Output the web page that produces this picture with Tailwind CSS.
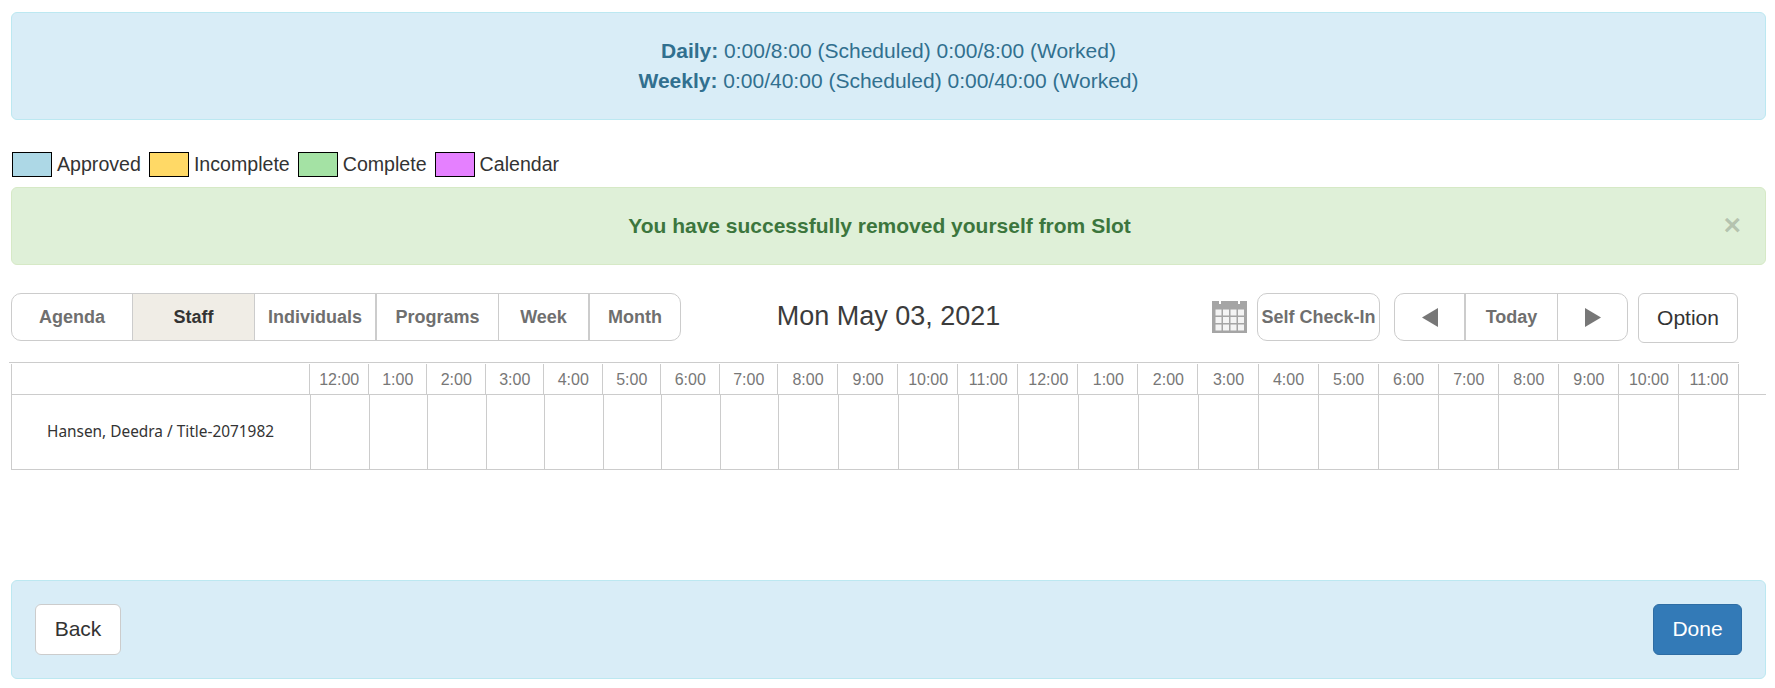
<!DOCTYPE html>
<html><head><meta charset="utf-8"><script src="https://cdn.jsdelivr.net/npm/@tailwindcss/browser@4"></script></head>
<body class="bg-white font-['Liberation_Sans',sans-serif] text-[#333]">
<div class="pt-[12px] pl-[11px] pr-[9px] h-[688px] overflow-hidden">
  <div class="h-[108px] rounded-[6px] border border-[#bce8f1] bg-[#d9edf7] text-[#31708f] text-[21px] leading-[30px] text-center pt-[23px]">
    <div><b>Daily:</b> 0:00/8:00 (Scheduled) 0:00/8:00 (Worked)</div>
    <div><b>Weekly:</b> 0:00/40:00 (Scheduled) 0:00/40:00 (Worked)</div>
  </div>
  <div class="flex items-center h-[25px] mt-[32px] ml-[1px] text-[19.6px] gap-[8px]">
    <div class="flex items-center gap-[5px]"><span class="w-[40px] h-[25px] border border-black bg-[#add8e6]"></span>Approved</div>
    <div class="flex items-center gap-[5px]"><span class="w-[40px] h-[25px] border border-black bg-[#ffd966]"></span>Incomplete</div>
    <div class="flex items-center gap-[5px]"><span class="w-[40px] h-[25px] border border-black bg-[#a4e2a4]"></span>Complete</div>
    <div class="flex items-center gap-[5px]"><span class="w-[40px] h-[25px] border border-black bg-[#e580ff]"></span>Calendar</div>
  </div>
  <div class="relative h-[78px] mt-[10px] mb-[28px] rounded-[6px] border border-[#d6e9c6] bg-[#dff0d8] text-[#3c763d] text-[21px] font-bold flex items-center justify-center pr-[18px]">
    You have successfully removed yourself from Slot
    <span class="absolute right-[24px] top-[22px] text-[#000]/20 text-[30px] leading-[30px]">×</span>
  </div>
  <div class="flex items-start h-[48px] text-[18px] font-bold text-[#6f6f6f]">
    <div class="flex h-[48px] w-[670px] rounded-[10px] border border-[#ccc] overflow-hidden">
      <div class="w-[121px] border-r border-[#ccc] flex items-center justify-center">Agenda</div>
      <div class="w-[122px] border-r border-[#ccc] bg-[#f0ede6] text-[#333] flex items-center justify-center">Staff</div>
      <div class="w-[122px] border-r-2 border-[#ccc] flex items-center justify-center">Individuals</div>
      <div class="w-[122px] border-r border-[#ccc] flex items-center justify-center">Programs</div>
      <div class="w-[91px] border-r-2 border-[#ccc] flex items-center justify-center">Week</div>
      <div class="flex-1 flex items-center justify-center">Month</div>
    </div>
    <div class="w-[531px] pr-[116px] text-center text-[27px] font-normal text-[#3c3c3c] leading-[46px]">Mon May 03, 2021</div>
    <svg class="w-[35px] h-[32px] mt-[8px] shrink-0" viewBox="0 0 35 32"><path fill="#a5a5a5" d="M0 0h7v3h2V0h17v3h2V0h7v32H0z"/><g fill="#f4f4f4"><rect x="3.500" y="8.500" width="6" height="6"/><rect x="11" y="8.500" width="6" height="6"/><rect x="18.500" y="8.500" width="6" height="6"/><rect x="26" y="8.500" width="6" height="6"/><rect x="3.500" y="16" width="6" height="6"/><rect x="11" y="16" width="6" height="6"/><rect x="18.500" y="16" width="6" height="6"/><rect x="26" y="16" width="6" height="6"/><rect x="3.500" y="23.500" width="6" height="6"/><rect x="11" y="23.500" width="6" height="6"/><rect x="18.500" y="23.500" width="6" height="6"/><rect x="26" y="23.500" width="6" height="6"/></g></svg>
    <div class="w-[123px] h-[48px] ml-[10px] rounded-[10px] border border-[#ccc] flex items-center justify-center whitespace-nowrap">Self Check-In</div>
    <div class="flex w-[234px] h-[48px] ml-[14px] rounded-[10px] border border-[#ccc]">
      <div class="w-[71px] border-r-2 border-[#ccc] flex items-center justify-center"><svg class="w-[16px] h-[19px]" viewBox="0 0 16 19"><path fill="#777" d="M16 0v19L0 9.500z"/></svg></div>
      <div class="w-[92px] border-r border-[#ccc] flex items-center justify-center">Today</div>
      <div class="flex-1 flex items-center justify-center"><svg class="w-[16px] h-[19px]" viewBox="0 0 16 19"><path fill="#777" d="M0 0v19l16-9.500z"/></svg></div>
    </div>
    <div class="w-[100px] h-[50px] ml-[10px] rounded-[6px] border border-[#ccc] flex items-center justify-center text-[21px] font-normal text-[#333]">Option</div>
  </div>
  <div class="mt-[21px] text-[16px] text-[#777]">
    <div class="h-px bg-[#ccc] w-[1730px] ml-[-2px]"></div>
    <div class="w-[1728px] h-[30px] mt-[1px] flex border-l border-r border-[#ccc]">
      <div class="w-[297px] shrink-0"></div>
      <div class="flex-1 grid grid-cols-[repeat(8,58.5px)_repeat(16,1fr)]">
        <div class="border-l border-[#ccc] flex items-center justify-center pt-[1px] pl-[1px]">12:00</div><div class="border-l border-[#ccc] flex items-center justify-center pt-[1px] pl-[1px]">1:00</div><div class="border-l border-[#ccc] flex items-center justify-center pt-[1px] pl-[1px]">2:00</div><div class="border-l border-[#ccc] flex items-center justify-center pt-[1px] pl-[1px]">3:00</div><div class="border-l border-[#ccc] flex items-center justify-center pt-[1px] pl-[1px]">4:00</div><div class="border-l border-[#ccc] flex items-center justify-center pt-[1px] pl-[1px]">5:00</div><div class="border-l border-[#ccc] flex items-center justify-center pt-[1px] pl-[1px]">6:00</div><div class="border-l border-[#ccc] flex items-center justify-center pt-[1px] pl-[1px]">7:00</div><div class="border-l border-[#ccc] flex items-center justify-center pt-[1px] pl-[1px]">8:00</div><div class="border-l border-[#ccc] flex items-center justify-center pt-[1px] pl-[1px]">9:00</div><div class="border-l border-[#ccc] flex items-center justify-center pt-[1px] pl-[1px]">10:00</div><div class="border-l border-[#ccc] flex items-center justify-center pt-[1px] pl-[1px]">11:00</div><div class="border-l border-[#ccc] flex items-center justify-center pt-[1px] pl-[1px]">12:00</div><div class="border-l border-[#ccc] flex items-center justify-center pt-[1px] pl-[1px]">1:00</div><div class="border-l border-[#ccc] flex items-center justify-center pt-[1px] pl-[1px]">2:00</div><div class="border-l border-[#ccc] flex items-center justify-center pt-[1px] pl-[1px]">3:00</div><div class="border-l border-[#ccc] flex items-center justify-center pt-[1px] pl-[1px]">4:00</div><div class="border-l border-[#ccc] flex items-center justify-center pt-[1px] pl-[1px]">5:00</div><div class="border-l border-[#ccc] flex items-center justify-center pt-[1px] pl-[1px]">6:00</div><div class="border-l border-[#ccc] flex items-center justify-center pt-[1px] pl-[1px]">7:00</div><div class="border-l border-[#ccc] flex items-center justify-center pt-[1px] pl-[1px]">8:00</div><div class="border-l border-[#ccc] flex items-center justify-center pt-[1px] pl-[1px]">9:00</div><div class="border-l border-[#ccc] flex items-center justify-center pt-[1px] pl-[1px]">10:00</div><div class="border-l border-[#ccc] flex items-center justify-center pt-[1px] pl-[1px]">11:00</div>
      </div>
    </div>
    <div class="h-px bg-[#ccc] w-[1755px]"></div>
    <div class="w-[1728px] h-[75px] flex border-b border-l border-r border-[#ccc]">
      <div class="w-[298px] shrink-0 flex items-center justify-center font-['Noto_Sans',sans-serif] text-[15.4px] text-[#333] pr-[1px]">Hansen, Deedra / Title-2071982</div>
      <div class="flex-1 grid grid-cols-[repeat(8,58.5px)_repeat(16,1fr)]">
        <div class="border-l border-[#ccc]"></div><div class="border-l border-[#ccc]"></div><div class="border-l border-[#ccc]"></div><div class="border-l border-[#ccc]"></div><div class="border-l border-[#ccc]"></div><div class="border-l border-[#ccc]"></div><div class="border-l border-[#ccc]"></div><div class="border-l border-[#ccc]"></div><div class="border-l border-[#ccc]"></div><div class="border-l border-[#ccc]"></div><div class="border-l border-[#ccc]"></div><div class="border-l border-[#ccc]"></div><div class="border-l border-[#ccc]"></div><div class="border-l border-[#ccc]"></div><div class="border-l border-[#ccc]"></div><div class="border-l border-[#ccc]"></div><div class="border-l border-[#ccc]"></div><div class="border-l border-[#ccc]"></div><div class="border-l border-[#ccc]"></div><div class="border-l border-[#ccc]"></div><div class="border-l border-[#ccc]"></div><div class="border-l border-[#ccc]"></div><div class="border-l border-[#ccc]"></div><div class="border-l border-[#ccc]"></div>
      </div>
    </div>
  </div>
  <div class="mt-[110px] h-[99px] rounded-[6px] border border-[#bce8f1] bg-[#d9edf7] flex items-center justify-between px-[23px] text-[21px]">
    <div class="w-[86px] h-[51px] pb-[1px] rounded-[6px] border border-[#ccc] bg-white flex items-center justify-center">Back</div>
    <div class="w-[89px] h-[51px] pb-[1px] rounded-[6px] border border-[#2e6da4] bg-[#337ab7] text-white flex items-center justify-center">Done</div>
  </div>
</div>
</body></html>
